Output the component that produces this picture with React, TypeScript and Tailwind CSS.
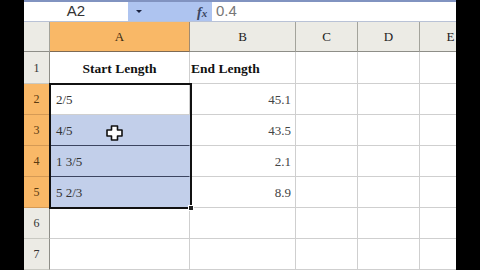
import React from "react";

const cols = [26, 140, 106, 62, 62, 62];
const letters = ["A", "B", "C", "D", "E"];

type Row = { n: number; a: string; b: string; h: number; bold?: boolean };
const rows: Row[] = [
  { n: 1, a: "Start Length", b: "End Length", h: 32, bold: true },
  { n: 2, a: "2/5", b: "45.1", h: 31 },
  { n: 3, a: "4/5", b: "43.5", h: 31 },
  { n: 4, a: "1 3/5", b: "2.1", h: 31 },
  { n: 5, a: "5 2/3", b: "8.9", h: 31 },
  { n: 6, a: "", b: "", h: 31 },
  { n: 7, a: "", b: "", h: 31 },
];

export default function App() {
  return (
    <div className="w-[480px] h-[270px] bg-black flex overflow-hidden">
      <div className="w-[24px] shrink-0" />
      <div
        className="w-[432px] shrink-0 h-[270px] relative overflow-hidden bg-white flex flex-col"
        style={{ fontFamily: '"Liberation Serif", serif' }}
      >
        {/* top formula bar */}
        <div className="h-[2px] bg-[#8193c0] shrink-0" />
        <div className="h-[20px] shrink-0 flex items-stretch border-b border-[#b9c2d6]">
          <div
            className="w-[104px] flex items-center justify-center text-[15px] text-[#333] bg-white"
            style={{ fontFamily: '"Liberation Sans", sans-serif' }}
          >
            A2
          </div>
          <div className="w-[84px] bg-[#aec4f0] flex items-center relative">
            <div className="ml-[8px] w-0 h-0 border-l-[3px] border-r-[3px] border-t-[3px] border-l-transparent border-r-transparent border-t-[#1b2340]" />
            <span className="absolute left-[69px] top-[0px] text-[14px] italic font-bold text-[#3a4560]">
              f<span className="text-[11px]">x</span>
            </span>
          </div>
          <div
            className="flex-1 bg-white flex items-center pl-[4px] text-[15px] text-[#777]"
            style={{ fontFamily: '"Liberation Sans", sans-serif' }}
          >
            0.4
          </div>
        </div>

        {/* column header */}
        <div className="flex h-[30px] shrink-0">
          {cols.map((w, i) => (
            <div
              key={i}
              style={{ width: w }}
              className={`shrink-0 flex items-center justify-center text-[13px] border-r border-b ${
                i === 1
                  ? "bg-[#f9b867] border-r-[#a08a70] border-b-[#7d6a55] text-[#3a2a10]"
                  : "bg-[#ecebe5] border-r-[#a3a39b] border-b-[#8e8e88] text-[#222]"
              }`}
            >
              {i > 0 ? letters[i - 1] : ""}
            </div>
          ))}
        </div>

        {/* rows */}
        {rows.map((r) => {
          const sel = r.n >= 2 && r.n <= 5;
          const blue = r.n >= 3 && r.n <= 5;
          return (
            <div key={r.n} className="flex shrink-0" style={{ height: r.h }}>
              <div
                className={`w-[26px] shrink-0 flex items-center justify-center text-[12px] border-r border-b ${
                  sel
                    ? "bg-[#f9b867] text-[#5a3a10] border-r-[#a08a70] border-b-[#d59a55]"
                    : "bg-[#ecebe5] text-[#333] border-r-[#8e8e88] border-b-[#c9c9c2]"
                }`}
              >
                {r.n}
              </div>
              <div
                className={`w-[140px] shrink-0 flex items-center border-r border-b ${
                  r.bold ? "justify-center pt-[4px] font-bold text-[13.5px] text-[#111]" : "pl-[6px] pt-[1px] text-[13px] text-[#333]"
                } ${blue ? "bg-[#c2cfea] border-b-[#3c4560] border-r-[#c2cfea]" : "bg-white border-b-[#cfcfcf] border-r-[#cfcfcf]"} ${
                  r.n === 2 ? "border-b-[#3c4560]" : ""
                }`}
              >
                {r.a}
              </div>
              <div
                className={`w-[106px] shrink-0 flex items-center border-r border-r-[#cfcfcf] border-b border-b-[#cfcfcf] ${
                  r.bold ? "justify-start pt-[4px] pl-[1px] font-bold text-[13.5px] text-[#111]" : "justify-end pt-[1px] pr-[4px] text-[13px] text-[#444]"
                }`}
              >
                {r.b}
              </div>
              <div className="w-[62px] shrink-0 border-r border-r-[#cfcfcf] border-b border-b-[#cfcfcf]" />
              <div className="w-[62px] shrink-0 border-r border-r-[#cfcfcf] border-b border-b-[#cfcfcf]" />
              <div className="w-[62px] shrink-0 border-r border-r-[#cfcfcf] border-b border-b-[#cfcfcf]" />
            </div>
          );
        })}

        {/* selection border overlay */}
        <div className="absolute left-[25px] top-[83px] w-[143px] h-[126px] border-2 border-[#111] pointer-events-none" />
        {/* fill handle */}
        <div className="absolute left-[164px] top-[205px] w-[6px] h-[6px] bg-[#222] border border-white pointer-events-none" />

        {/* plus cursor */}
        <svg
          className="absolute left-[82px] top-[125px]"
          width="17"
          height="16"
          viewBox="0 0 17 16"
        >
          <path
            d="M5.5 1 H11.5 V5 H16 V11 H11.5 V15 H5.5 V11 H1 V5 H5.5 Z"
            fill="#fff"
            stroke="#111"
            strokeWidth="1.6"
            strokeLinejoin="round"
          />
        </svg>
      </div>
    </div>
  );
}
